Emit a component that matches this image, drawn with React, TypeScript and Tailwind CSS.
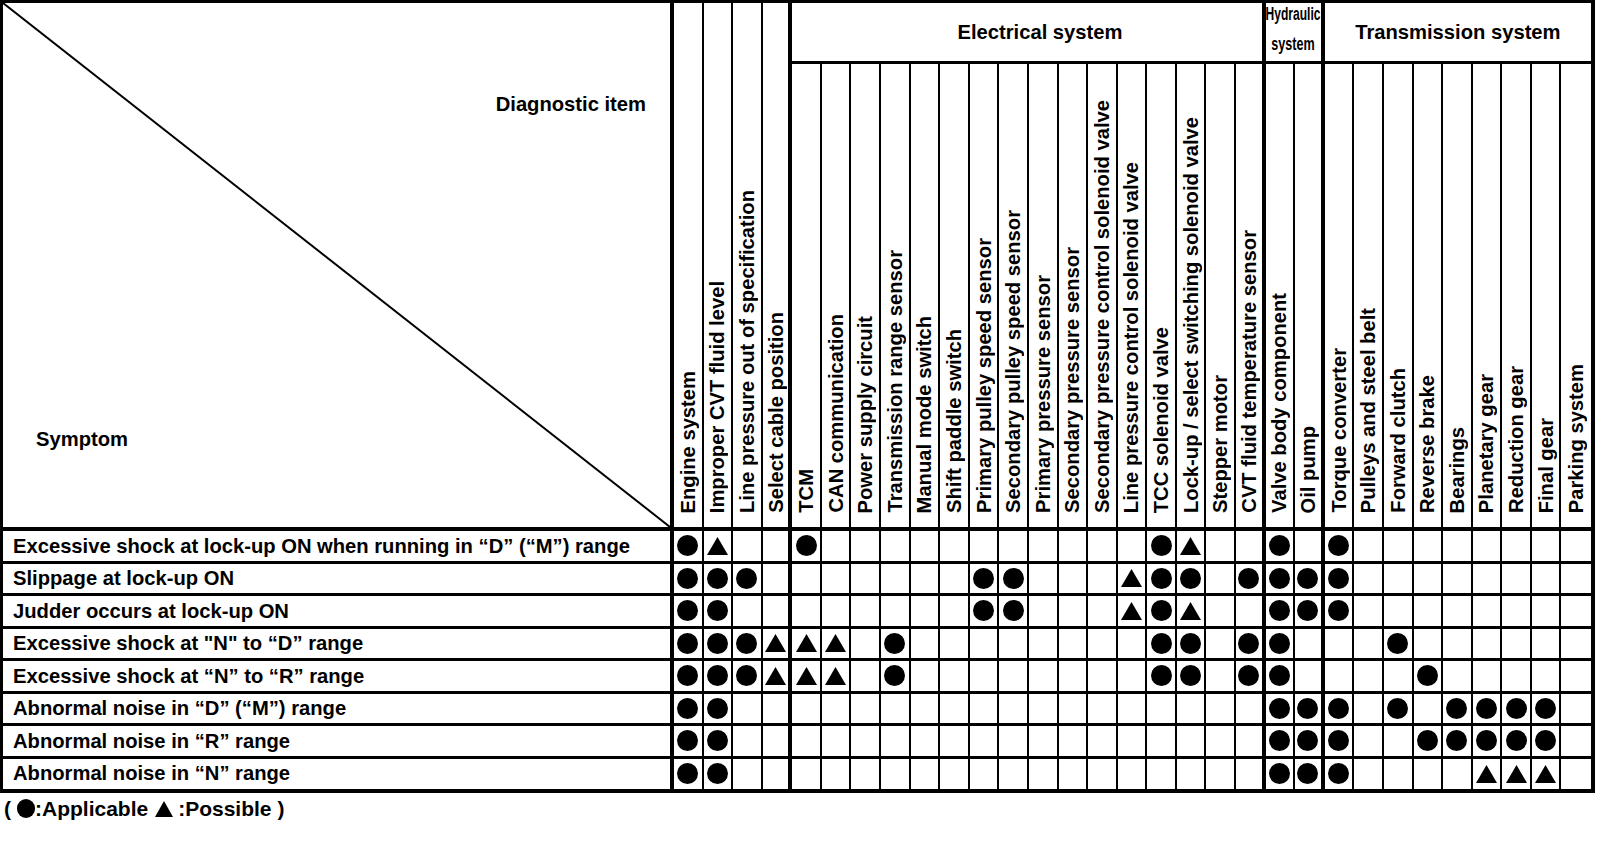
const ITEMS = [
  "Engine system",
  "Improper CVT fluid level",
  "Line pressure out of specification",
  "Select cable position",
  "TCM",
  "CAN communication",
  "Power supply circuit",
  "Transmission range sensor",
  "Manual mode switch",
  "Shift paddle switch",
  "Primary pulley speed sensor",
  "Secondary pulley speed sensor",
  "Primary pressure sensor",
  "Secondary pressure sensor",
  "Secondary pressure control solenoid valve",
  "Line pressure control solenoid valve",
  "TCC solenoid valve",
  "Lock-up / select switching solenoid valve",
  "Stepper motor",
  "CVT fluid temperature sensor",
  "Valve body component",
  "Oil pump",
  "Torque converter",
  "Pulleys and steel belt",
  "Forward clutch",
  "Reverse brake",
  "Bearings",
  "Planetary gear",
  "Reduction gear",
  "Final gear",
  "Parking system",
];

// o = applicable, ^ = possible, . = blank (one char per diagnostic item)
const SYMPTOMS = [
  { label: "Excessive shock at lock-up ON when running in “D” (“M”) range", marks: "o^..o...........o^..o.o........" },
  { label: "Slippage at lock-up ON", marks: "ooo.......oo...^oo.oooo........" },
  { label: "Judder occurs at lock-up ON", marks: "oo........oo...^o^..ooo........" },
  { label: "Excessive shock at \"N\" to “D” range", marks: "ooo^^^.o........oo.oo...o......" },
  { label: "Excessive shock at “N” to “R” range", marks: "ooo^^^.o........oo.oo....o....." },
  { label: "Abnormal noise in “D” (“M”) range", marks: "oo..................ooo.o.oooo." },
  { label: "Abnormal noise in “R” range", marks: "oo..................ooo..ooooo." },
  { label: "Abnormal noise in “N” range", marks: "oo..................ooo....^^^." },
];

function rightBorder(col: number) {
  if (col === 31) return "border-r-0";
  if (col === 4 || col === 20 || col === 22) return "border-r-4";
  return "border-r-2";
}

function Dot({ size = "h-[21px] w-[21px]" }: { size?: string }) {
  return <span className={`block rounded-full bg-black ${size}`} />;
}

function Tri({ w = 21, h = 18 }: { w?: number; h?: number }) {
  return (
    <svg width={w} height={h} viewBox={`0 0 ${w} ${h}`} className="block">
      <polygon points={`${w / 2},0 ${w},${h} 0,${h}`} fill="black" />
    </svg>
  );
}

function ItemLabel({ col, label, span }: { col: number; label: string; span?: boolean }) {
  return (
    <div
      className={`flex items-end justify-center border-b-4 border-black pb-[14px] ${rightBorder(col)} ${
        span ? "row-span-2" : ""
      }`}
    >
      <span className="[writing-mode:vertical-rl] rotate-180 whitespace-nowrap leading-[24px]">{label}</span>
    </div>
  );
}

export default function App() {
  return (
    <div className="w-[1600px] h-[864px] bg-white text-black font-['Liberation_Sans',Arial,sans-serif] text-[20.2px] font-bold">
      <div className="grid w-[1595px] grid-cols-[671px_repeat(31,minmax(0,1fr))] grid-rows-[61px_467px_repeat(7,32.5px)_30px] border-t-[3px] border-l-[3px] border-r-4 border-b-4 border-black">
        {/* corner cell */}
        <div className="relative row-span-2 flex flex-col justify-between border-r-4 border-b-4 border-black pt-[89px] pb-[76px]">
          <svg
            className="absolute inset-0 h-full w-full"
            viewBox="0 0 100 100"
            preserveAspectRatio="none"
            aria-hidden
          >
            <line x1="0" y1="0" x2="100" y2="100" stroke="black" strokeWidth="2" vectorEffect="non-scaling-stroke" />
          </svg>
          <div className="self-end pr-[24px] leading-[24px]">Diagnostic item</div>
          <div className="self-start pl-[33px] leading-[24px]">Symptom</div>
        </div>

        {ITEMS.slice(0, 4).map((label, i) => (
          <ItemLabel key={label} col={i + 1} label={label} span />
        ))}

        <div className="col-span-16 flex items-center justify-center border-r-4 border-b-[3px] border-black pl-[26px]">
          Electrical system
        </div>
        <div className="col-span-2 flex flex-col items-center gap-[12px] border-r-4 border-b-[3px] border-black pt-[2px] text-[18px] leading-[18px]">
          <span className="inline-block scale-x-[0.67] whitespace-nowrap">Hydraulic</span>
          <span className="inline-block scale-x-[0.7] whitespace-nowrap">system</span>
        </div>
        <div className="col-span-9 flex items-center justify-center border-b-[3px] border-black">
          Transmission system
        </div>

        {ITEMS.slice(4).map((label, i) => (
          <ItemLabel key={label} col={i + 5} label={label} />
        ))}

        {SYMPTOMS.map((row, r) => {
          const last = r === SYMPTOMS.length - 1;
          const bottom = last ? "border-b-0" : "border-b-[3px]";
          return [
            <div
              key={`s${r}`}
              className={`flex items-center border-r-4 border-black pl-[10px] whitespace-nowrap leading-none ${bottom}`}
            >
              {row.label}
            </div>,
            ...row.marks.split("").map((m, c) => (
              <div
                key={`m${r}-${c}`}
                className={`flex items-center justify-center border-black ${bottom} ${rightBorder(c + 1)}`}
              >
                {m === "o" && <Dot />}
                {m === "^" && <Tri />}
              </div>
            )),
          ];
        })}
      </div>

      <div className="mt-[6px] flex items-center pl-[4px] text-[21px] leading-[20px]">
        <span>(</span>
        <span className="ml-[6px]">
          <Dot size="h-[19px] w-[18px]" />
        </span>
        <span>:Applicable</span>
        <span className="ml-[7px]">
          <Tri w={18} h={16} />
        </span>
        <span className="ml-[5px]">:Possible</span>
        <span className="ml-[6px]">)</span>
      </div>
    </div>
  );
}
